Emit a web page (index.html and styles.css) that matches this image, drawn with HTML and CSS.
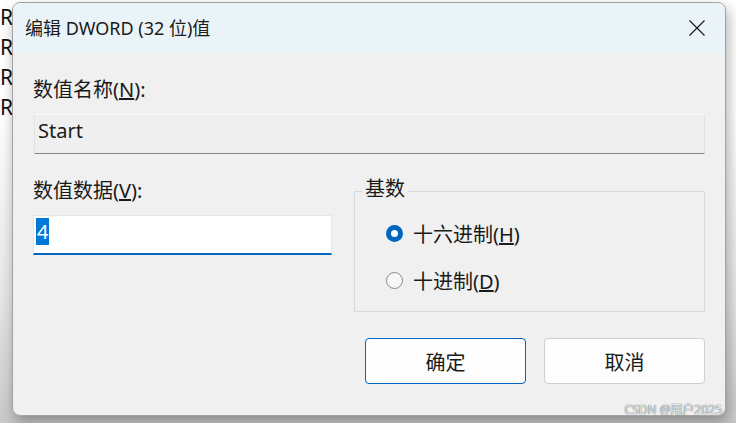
FILE: index.html
```html
<!DOCTYPE html>
<html lang="zh-CN">
<head>
<meta charset="utf-8">
<title>编辑 DWORD (32 位)值</title>
<link rel="stylesheet" href="styles.css">
</head>
<body>
<div class="desktop">
  <div class="behind">
    <div class="behind-line">R</div>
    <div class="behind-line">R</div>
    <div class="behind-line">R</div>
    <div class="behind-line">R</div>
  </div>

  <div class="dialog">
    <div class="titlebar">
      <span class="title">编辑 DWORD (32 位)值</span>
      <span class="close">
        <svg width="16" height="16" viewBox="0 0 16 16"><path d="M0.5 0.5 L15.5 15.5 M15.5 0.5 L0.5 15.5" stroke="#1b1b1b" stroke-width="1.2" fill="none"/></svg>
      </span>
    </div>
    <div class="content">
      <div class="label first">数值名称(<u>N</u>):</div>
      <div class="namefield">Start</div>
      <div class="row">
        <div class="leftcol">
          <div class="label">数值数据(<u>V</u>):</div>
          <div class="datafield"><span class="sel">4</span></div>
        </div>
        <fieldset class="group">
          <legend class="legend">基数</legend>
          <div class="radio-row first-radio">
            <span class="radio checked"></span>
            <span class="radio-text">十六进制(<u>H</u>)</span>
          </div>
          <div class="radio-row">
            <span class="radio"></span>
            <span class="radio-text">十进制(<u>D</u>)</span>
          </div>
        </fieldset>
      </div>
      <div class="buttons">
        <div class="btn primary">确定</div>
        <div class="btn">取消</div>
      </div>
    </div>
  </div>

  <div class="watermark">CSDN @用户2025</div>
</div>
</body>
</html>
```

FILE: styles.css
```css
html, body {
  margin: 0;
  padding: 0;
}
body {
  width: 736px;
  height: 423px;
  overflow: hidden;
  background: #ffffff;
  font-family: "Noto Sans", "Noto Sans CJK SC", sans-serif;
  color: #1a1a1a;
}
.desktop {
  position: relative;
  width: 736px;
  height: 423px;
  overflow: hidden;
  background: linear-gradient(to bottom, #ffffff 0px, #ffffff 110px, #e6e6e6 300px, #c9c9c9 423px);
}
.behind {
  display: flex;
  flex-direction: column;
  padding-top: 4px;
}
.behind-line {
  height: 30px;
  line-height: 26px;
  font-size: 21px;
  color: #111;
}
.dialog {
  position: absolute;
  left: 12px;
  top: 2px;
  width: 712px;
  height: 412px;
  border: 1px solid #a3a3a3;
  border-radius: 8px;
  background: #f0f0f0;
  box-shadow: 2px 6px 14px rgba(0, 0, 0, 0.32);
  display: flex;
  flex-direction: column;
  overflow: hidden;
}
.titlebar {
  height: 50px;
  flex: none;
  background: #eaf4f8;
  display: flex;
  align-items: center;
  justify-content: space-between;
  padding: 0 20px 0 12px;
}
.title {
  font-size: 18px;
  line-height: 24px;
  color: #1a1a1a;
}
.close {
  display: flex;
  width: 16px;
  height: 16px;
}
.content {
  flex: 1;
  padding: 0 20px 0 20px;
  display: flex;
  flex-direction: column;
  font-size: 20px;
}
.label {
  height: 24px;
  line-height: 24px;
  white-space: nowrap;
}
.label.first {
  margin-top: 25px;
}
.namefield {
  margin-top: 12px;
  box-sizing: border-box;
  height: 40px;
  margin-left: 1px;
  border: 1px solid #e2e2e2;
  border-top-color: #fbfbfb;
  border-bottom-color: #858585;
  background: #efefef;
  padding-left: 3px;
  line-height: 32px;
}
.row {
  margin-top: 25px;
  display: flex;
  gap: 22px;
}
.leftcol {
  width: 299px;
  flex: none;
  display: flex;
  flex-direction: column;
}
.datafield {
  margin-top: 12px;
  height: 40px;
  box-sizing: border-box;
  background: #ffffff;
  border: 1px solid #e6e6e6;
  border-bottom: 2px solid #0067c0;
  padding: 2px 0 0 2px;
  display: flex;
  align-items: flex-start;
}
.sel {
  background: #0078d7;
  color: #ffffff;
  height: 27px;
  line-height: 27px;
  padding: 0 1px;
}
.group {
  margin: 0;
  width: 351px;
  height: 133px;
  box-sizing: border-box;
  border: 1px solid #dadada;
  padding: 0 0 0 31px;
  min-width: 0;
}
.legend {
  padding: 0 3px;
  margin-left: -24px;
  height: 24px;
  line-height: 20px;
}
.radio-row {
  display: flex;
  align-items: center;
  height: 24px;
  gap: 10px;
}
.radio-row.first-radio {
  margin-top: 18px;
  margin-bottom: 23px;
}
.radio {
  width: 17px;
  height: 17px;
  box-sizing: border-box;
  border-radius: 50%;
  border: 1px solid #8a8a8a;
  background: #f6f6f6;
  flex: none;
}
.radio.checked {
  border: 5px solid #0067c0;
  background: #ffffff;
}
.buttons {
  margin-top: 26px;
  display: flex;
  justify-content: flex-end;
  gap: 18px;
}
.btn {
  width: 161px;
  height: 46px;
  box-sizing: border-box;
  border: 1px solid #d0d0d0;
  border-radius: 4px;
  background: #fdfdfd;
  display: flex;
  align-items: center;
  justify-content: center;
  font-size: 20px;
}
.btn.primary {
  border-color: #0067c0;
}
.watermark {
  position: absolute;
  right: 14px;
  bottom: 6px;
  font-size: 12px;
  line-height: 14px;
  color: rgba(255, 255, 255, 0.85);
  text-shadow: 0 0 1px #666, 0 0 1px #666;
  font-family: "Noto Sans", "Noto Sans CJK SC", sans-serif;
}
```
